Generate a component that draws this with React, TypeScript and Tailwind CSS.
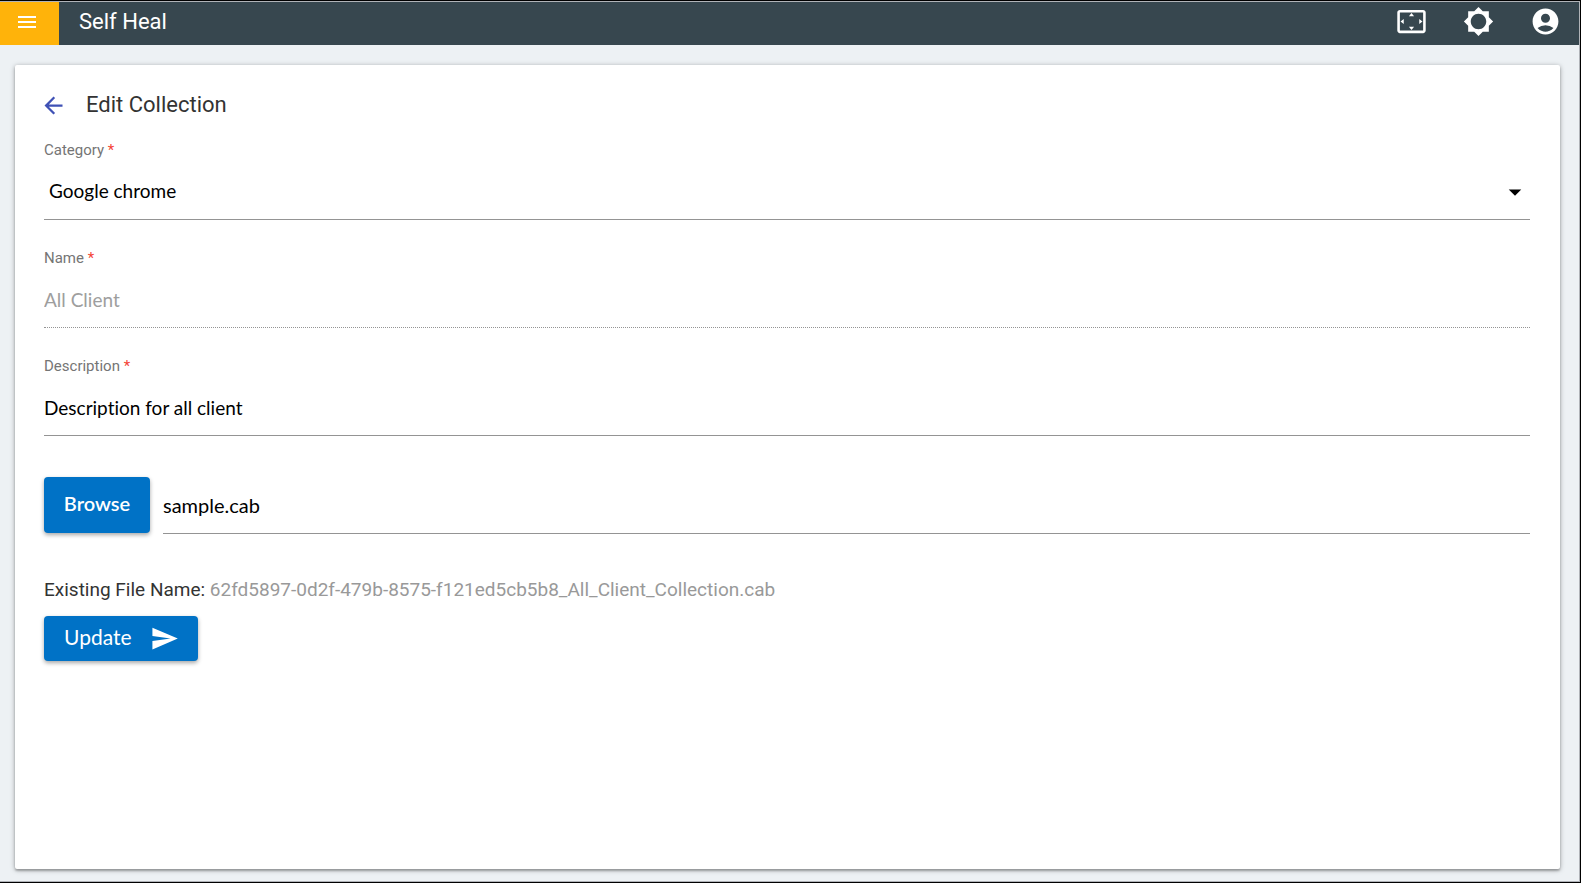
import type { ReactNode } from "react";
import {
  MdAccountCircle,
  MdArrowBack,
  MdArrowDropDown,
  MdBrightness5,
  MdMenu,
  MdSend,
  MdSettingsOverscan,
} from "react-icons/md";

const line =
  "w-full border-b border-[#949494] bg-transparent font-['Lato',sans-serif] [font-variant-ligatures:none] outline-none";

function Field({ id, label, children }: { id: string; label: string; children: ReactNode }) {
  return (
    <div className="flex flex-col">
      <label htmlFor={id} className="text-[15px] leading-5 text-[#757575]">
        {label} <span className="text-[#f44336]">*</span>
      </label>
      {children}
    </div>
  );
}

function Header() {
  return (
    <header className="flex h-[43px] shrink-0 items-stretch bg-[#37474f] text-white">
      <button type="button" aria-label="Menu" className="flex w-[59px] items-center bg-[#ffb30a] pb-[3px] pl-[15px]">
        <MdMenu size={24} />
      </button>
      <h1 className="flex grow items-center pb-1 pl-5 text-[22px] leading-8">Self Heal</h1>
      <nav className="flex items-center gap-9 pr-[18px] pb-1">
        <button type="button" aria-label="Full screen" className="flex w-[31px] justify-center">
          <MdSettingsOverscan size={31} />
        </button>
        <button type="button" aria-label="Brightness" className="flex w-[31px] justify-center">
          <MdBrightness5 size={31} />
        </button>
        <button type="button" aria-label="Account" className="flex w-[31px] justify-center">
          <MdAccountCircle size={31} />
        </button>
      </nav>
    </header>
  );
}

export default function App() {
  return (
    <div className="min-h-screen border-y border-r border-black font-['Roboto',sans-serif]">
      <div className="flex min-h-[calc(100vh-2px)] flex-col border-y border-r border-[#b0b3b8] bg-[#edf1f4]">
        <Header />
        <main className="mt-5 mr-[19px] mb-3 ml-[15px] flex grow flex-col rounded-xs bg-white pt-6 pr-[30px] pl-[29px] shadow-[0_1px_5px_rgba(0,0,0,0.35),0_2px_2px_rgba(0,0,0,0.2)]">
          <div className="flex h-8 items-center gap-[19px]">
            <a href="#collections" aria-label="Back" className="-ml-1 text-[#3f51b5]">
              <MdArrowBack size={27} />
            </a>
            <h2 className="text-[22px] leading-8 text-[#333333]">Edit Collection</h2>
          </div>
          <form className="mt-[19px] flex flex-col items-start" onSubmit={(e) => e.preventDefault()}>
            <div className="flex w-full flex-col gap-7">
              <Field id="category" label="Category">
                <div className="relative">
                  <select
                    id="category"
                    defaultValue="chrome"
                    className={`${line} h-[60px] appearance-none pt-[3px] pl-[5px] text-[19px] text-black`}
                  >
                    <option value="chrome">Google chrome</option>
                  </select>
                  <MdArrowDropDown size={30} className="pointer-events-none absolute top-[17px] right-0" />
                </div>
              </Field>
              <Field id="name" label="Name">
                <input
                  id="name"
                  disabled
                  defaultValue="All Client"
                  className={`${line} h-[60px] border-dotted pt-[3px] text-[19px] text-[#9e9e9e]`}
                />
              </Field>
              <Field id="description" label="Description">
                <input
                  id="description"
                  defaultValue="Description for all client"
                  className={`${line} h-[60px] pt-[3px] text-[19px] text-black`}
                />
              </Field>
            </div>
            <div className="mt-[41px] flex w-full items-stretch gap-[13px]">
              <button
                type="button"
                className="h-14 w-[106px] shrink-0 rounded-sm bg-[#0072c6] pb-1 font-['Lato',sans-serif] text-[20px] font-semibold text-white shadow-[0_2px_4px_rgba(0,0,0,0.35)]"
              >
                Browse
              </button>
              <input
                aria-label="Selected file"
                defaultValue="sample.cab"
                className={`${line} h-[57px] text-[20px] text-black`}
              />
            </div>
            <p className="mt-11 text-[19px] leading-6 text-[#333333]">
              Existing File Name:{" "}
              <span className="text-[#999999]">62fd5897-0d2f-479b-8575-f121ed5cb5b8_All_Client_Collection.cab</span>
            </p>
            <button
              type="submit"
              className="mt-[14px] flex h-[45px] items-center gap-[18px] rounded-sm bg-[#0072c6] pr-[19px] pl-5 font-['Lato',sans-serif] text-[21px] text-white shadow-[0_2px_4px_rgba(0,0,0,0.35)]"
            >
              <span className="pb-[3px]">Update</span>
              <MdSend size={29} />
            </button>
          </form>
        </main>
      </div>
    </div>
  );
}
